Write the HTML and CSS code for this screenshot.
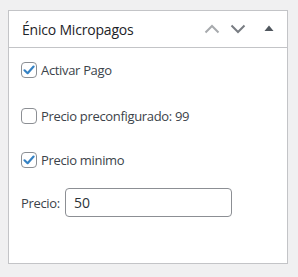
FILE: index.html
```html
<!DOCTYPE html>
<html>
<head>
<meta charset="utf-8">
<link rel="stylesheet" href="styles.css">
</head>
<body>
<div class="postbox">
  <div class="postbox-header">
    <h2 class="title">Énico Micropagos</h2>
    <div class="actions">
      <span class="btn up"><svg width="16" height="10" viewBox="0 0 16 10"><path d="M1.5 8.5 L8 2 L14.5 8.5" fill="none" stroke="currentColor" stroke-width="2"/></svg></span>
      <span class="btn down"><svg width="16" height="10" viewBox="0 0 16 10"><path d="M1.5 1.5 L8 8 L14.5 1.5" fill="none" stroke="currentColor" stroke-width="2"/></svg></span>
      <span class="btn toggle"><svg width="10" height="6" viewBox="0 0 10 6"><path d="M0.5 6 L5 0.5 L9.5 6 Z" fill="currentColor"/></svg></span>
    </div>
  </div>
  <div class="inside">
    <label class="row row1"><span class="cb checked"><svg width="14" height="14" viewBox="0 0 14 14"><path d="M2.5 7.3 L5.6 10.2 L11.6 3.6" fill="none" stroke="currentColor" stroke-width="2.2" stroke-linecap="round" stroke-linejoin="round"/></svg></span><span class="lbl">Activar Pago</span></label>
    <label class="row row2"><span class="cb"></span><span class="lbl">Precio preconfigurado: 99</span></label>
    <label class="row row3"><span class="cb checked"><svg width="14" height="14" viewBox="0 0 14 14"><path d="M2.5 7.3 L5.6 10.2 L11.6 3.6" fill="none" stroke="currentColor" stroke-width="2.2" stroke-linecap="round" stroke-linejoin="round"/></svg></span><span class="lbl">Precio minimo</span></label>
    <div class="row price"><span class="lbl">Precio:</span><span class="input">50</span></div>
  </div>
</div>
</body>
</html>
```
FILE: styles.css
```css
html, body {
  margin: 0;
  padding: 0;
  background: #f0f0f1;
  font-family: "Open Sans", "Noto Sans", sans-serif;
  color: #3c434a;
}
.postbox {
  box-sizing: border-box;
  margin: 10px 0 0 8px;
  width: 280px;
  height: 254px;
  background: #fff;
  border: 1px solid #c3c4c7;
}
.postbox-header {
  box-sizing: border-box;
  height: 37px;
  border-bottom: 1px solid #c3c4c7;
  display: flex;
  align-items: center;
  justify-content: space-between;
  padding: 0 0 0 13px;
}
.title {
  margin: 0;
  font-size: 14px;
  font-weight: 400;
  color: #1d2327;
  letter-spacing: -0.2px;
}
.actions {
  display: flex;
  align-items: center;
  height: 100%;
}
.btn {
  display: flex;
  align-items: center;
  justify-content: center;
  height: 100%;
}
.btn.up { width: 26px; color: #a7aaad; }
.btn.down { width: 26px; color: #787c82; }
.btn.toggle { width: 36px; color: #50575e; padding-bottom: 2px; box-sizing: border-box; }
.inside {
  padding: 14px 0 0 12px;
  display: flex;
  flex-direction: column;
}
.row {
  display: flex;
  align-items: center;
  font-size: 13px;
  color: #3c434a;
}
.row2 { margin-top: 30px; }
.row3 { margin-top: 28px; }
.price { margin-top: 20px; }
.cb {
  box-sizing: border-box;
  width: 16px;
  height: 16px;
  border: 1px solid #8c8f94;
  border-radius: 4px;
  background: #fff;
  display: flex;
  align-items: center;
  justify-content: center;
  color: #3582c4;
  margin-right: 4px;
}
.lbl {
  line-height: 16px;
  letter-spacing: -0.33px;
}
.price .lbl { margin-right: 5px; }
.input {
  box-sizing: border-box;
  width: 167px;
  height: 29px;
  border: 1px solid #8c8f94;
  border-radius: 4px;
  padding: 0 8px;
  display: flex;
  align-items: center;
  font-size: 14px;
  color: #2c3338;
}
```
